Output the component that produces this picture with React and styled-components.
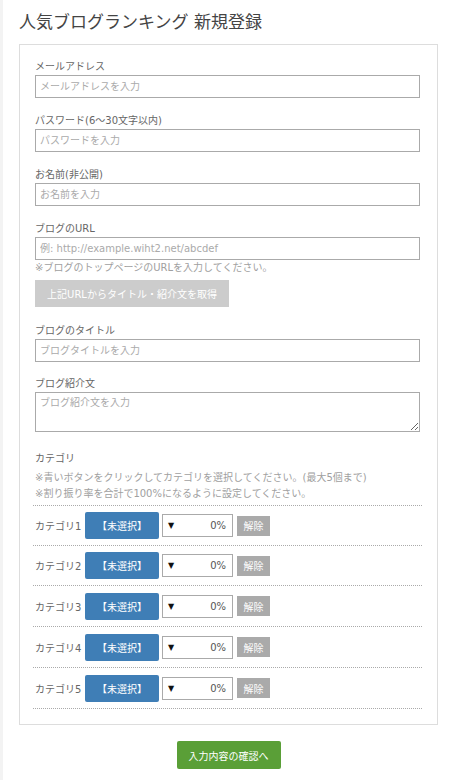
import React from "react";
import styled, { createGlobalStyle } from "styled-components";

const GlobalStyle = createGlobalStyle`
    body {
        margin: 0;
        background: #ffffff;
        font-family: "DejaVu Sans", "Noto Sans CJK JP", sans-serif;
        color: #555;
    }
    * { box-sizing: border-box; }
`

const Page = styled.div`
    border-left: 3px solid #f3f3f3;
    padding: 10px 12px 20px 16px;
    min-height: 780px;
`

const Title = styled.h1`
    margin: 0 0 10px;
    font-size: 17px;
    line-height: 24px;
    font-weight: 400;
    color: #444;
`

const Card = styled.div`
    border: 1px solid #ddd;
    padding: 15px 17px 15px 15px;
`

const Field = styled.div`
    display: flex;
    flex-direction: column;
    margin-bottom: ${props => props.$gap ?? 16}px;
`

const Label = styled.label`
    font-size: 10px;
    line-height: 14px;
    margin-bottom: 1px;
    color: #666;
`

const Input = styled.input`
    height: 23px;
    width: 100%;
    border: 1px solid #aaa;
    padding: 0 4px;
    font-size: 10px;
    font-family: inherit;
    color: #555;
    &::placeholder { color: #aaa; }
`

const TextArea = styled.textarea`
    height: 40px;
    width: 100%;
    border: 1px solid #aaa;
    padding: 3px 4px;
    font-size: 10px;
    line-height: 14px;
    font-family: inherit;
    &::placeholder { color: #aaa; }
`

const Note = styled.p`
    margin: 0;
    font-size: 10px;
    line-height: 16px;
    color: #a0a0a0;
`

const FetchButton = styled.button`
    margin-top: 4px;
    width: 194px;
    height: 27px;
    border: none;
    background: #ccc;
    color: #fff;
    font-size: 10px;
    font-family: inherit;
    text-align: center;
`

const CategoryHead = styled.div`
    display: flex;
    flex-direction: column;
    margin-bottom: 3px;
`

const CategoryLabel = styled.div`
    font-size: 10px;
    line-height: 16px;
    color: #666;
    margin-bottom: 3px;
`

const CategoryList = styled.div`
    margin: 0 -2px;
    border-bottom: 1px dotted #aaa;
`

const CategoryRow = styled.div`
    display: flex;
    align-items: center;
    height: ${props => props.$tall ? 41 : 40}px;
    padding: 0 2px;
    border-top: 1px dotted #aaa;
`

const RowLabel = styled.span`
    width: 50px;
    font-size: 10px;
    color: #666;
`

const PickButton = styled.button`
    width: 74px;
    height: 27px;
    border: none;
    border-radius: 2px;
    background: #3f7eb6;
    color: #fff;
    font-size: 10px;
    font-family: inherit;
    margin-right: 3px;
`

const Ratio = styled.div`
    display: flex;
    align-items: center;
    justify-content: space-between;
    width: 71px;
    height: 23px;
    border: 1px solid #aaa;
    background: #fff;
    padding: 0 6px 0 5px;
    margin-right: 4px;
    font-size: 10px;
    color: #555;
`

const Arrow = styled.span`
    font-size: 8px;
    color: #111;
`

const ClearButton = styled.button`
    width: 33px;
    height: 20px;
    border: none;
    background: #aaa;
    color: #fff;
    font-size: 10px;
    font-family: inherit;
    padding: 0;
`

const Footer = styled.div`
    display: flex;
    justify-content: center;
    padding-top: 16px;
`

const ConfirmButton = styled.button`
    width: 104px;
    height: 28px;
    border: none;
    border-radius: 2px;
    background: #5a9f37;
    color: #fff;
    font-size: 10px;
    font-family: inherit;
`

const fields = [
    { label: "メールアドレス", placeholder: "メールアドレスを入力" },
    { label: "パスワード(6〜30文字以内)", placeholder: "パスワードを入力" },
    { label: "お名前(非公開)", placeholder: "お名前を入力" },
]

const categories = [1, 2, 3, 4, 5]

const App = () => {
    return (
        <>
            <GlobalStyle />
            <Page>
                <Title>人気ブログランキング 新規登録</Title>
                <Card>
                    {fields.map(f => (
                        <Field key={f.label}>
                            <Label>{f.label}</Label>
                            <Input placeholder={f.placeholder} />
                        </Field>
                    ))}
                    <Field $gap={17}>
                        <Label>ブログのURL</Label>
                        <Input placeholder="例: http://example.wiht2.net/abcdef" />
                        <Note>※ブログのトップページのURLを入力してください。</Note>
                        <FetchButton>上記URLからタイトル・紹介文を取得</FetchButton>
                    </Field>
                    <Field $gap={15}>
                        <Label>ブログのタイトル</Label>
                        <Input placeholder="ブログタイトルを入力" />
                    </Field>
                    <Field $gap={19}>
                        <Label>ブログ紹介文</Label>
                        <TextArea placeholder="ブログ紹介文を入力" />
                    </Field>
                    <CategoryHead>
                        <CategoryLabel>カテゴリ</CategoryLabel>
                        <Note>※青いボタンをクリックしてカテゴリを選択してください。(最大5個まで)</Note>
                        <Note>※割り振り率を合計で100%になるように設定してください。</Note>
                    </CategoryHead>
                    <CategoryList>
                        {categories.map(n => (
                            <CategoryRow key={n} $tall={n >= 3}>
                                <RowLabel>{`カテゴリ${n}`}</RowLabel>
                                <PickButton>【未選択】</PickButton>
                                <Ratio>
                                    <Arrow>▼</Arrow>
                                    <span>0%</span>
                                </Ratio>
                                <ClearButton>解除</ClearButton>
                            </CategoryRow>
                        ))}
                    </CategoryList>
                </Card>
                <Footer>
                    <ConfirmButton>入力内容の確認へ</ConfirmButton>
                </Footer>
            </Page>
        </>
    )
}

export default App;
